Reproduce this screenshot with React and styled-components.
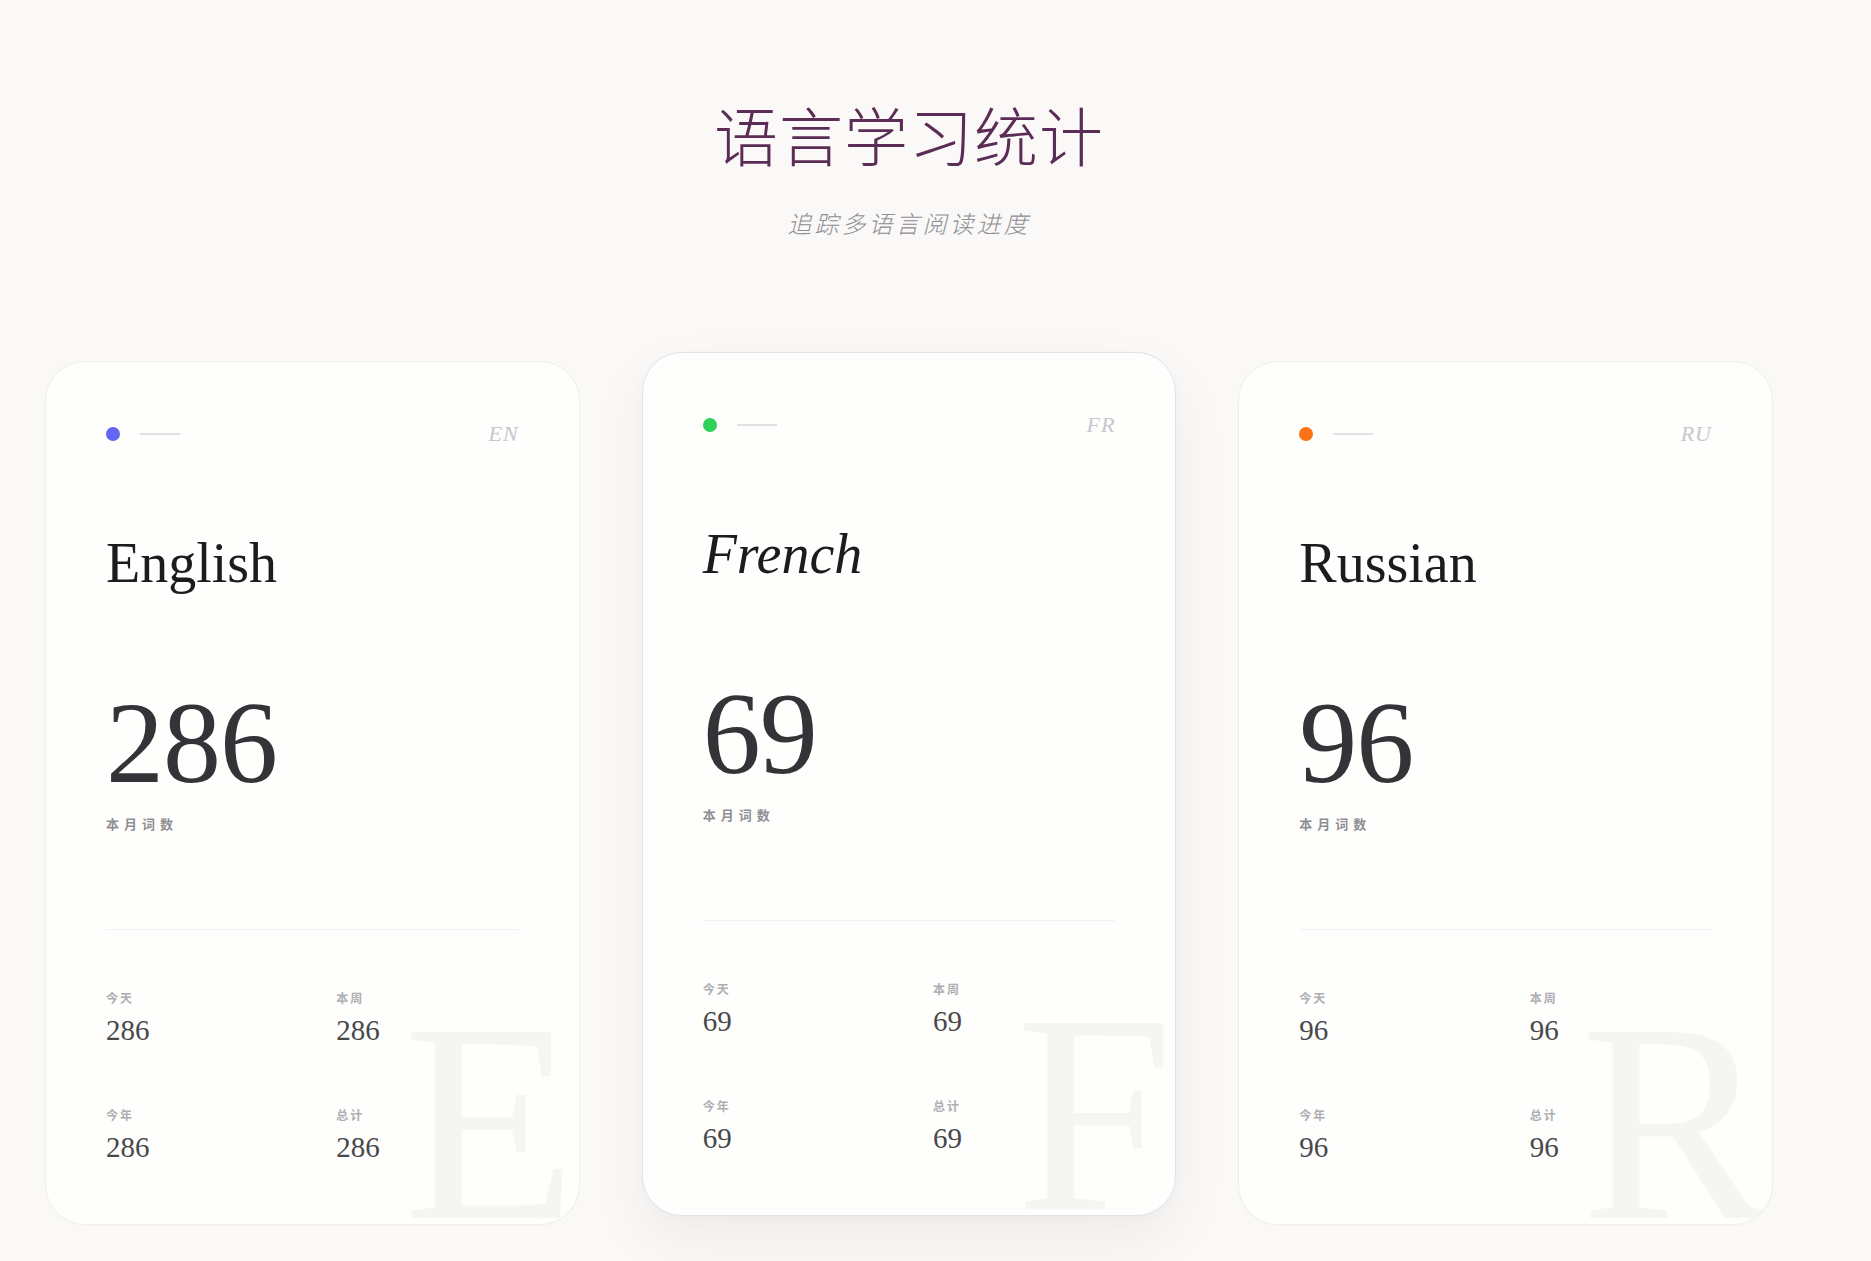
import React from "react";
import styled, { createGlobalStyle } from "styled-components";

const GlobalStyle = createGlobalStyle`
  * { box-sizing: border-box; }
  html, body {
    margin: 0;
    padding: 0;
    background: #faf9f7;
  }
  body {
    font-family: "Liberation Serif", "Noto Sans CJK SC", serif;
  }
`;

const languages = [
  {
    name: "English",
    code: "EN",
    letter: "E",
    color: "#6366f1",
    month: 286,
    today: 286,
    week: 286,
    year: 286,
    total: 286,
  },
  {
    name: "French",
    code: "FR",
    letter: "F",
    color: "#30d158",
    month: 69,
    today: 69,
    week: 69,
    year: 69,
    total: 69,
    italic: true,
    active: true,
  },
  {
    name: "Russian",
    code: "RU",
    letter: "R",
    color: "#f97316",
    month: 96,
    today: 96,
    week: 96,
    year: 96,
    total: 96,
  },
];

const App = () => {
  return (
    <>
      <GlobalStyle />
      <Page>
        <Header>
          <Title>语言学习统计</Title>
          <Subtitle>追踪多语言阅读进度</Subtitle>
        </Header>
        <Cards>
          {languages.map((lang) => (
            <Card key={lang.code} $active={lang.active}>
              <CardTop>
                <Marker>
                  <Dot $color={lang.color} />
                  <Rule />
                </Marker>
                <Code>{lang.code}</Code>
              </CardTop>
              <LangName $italic={lang.italic}>{lang.name}</LangName>
              <BigCount>{lang.month}</BigCount>
              <CountLabel>本月词数</CountLabel>
              <Divider />
              <StatGrid>
                <Stat>
                  <StatLabel>今天</StatLabel>
                  <StatValue>{lang.today}</StatValue>
                </Stat>
                <Stat>
                  <StatLabel>本周</StatLabel>
                  <StatValue>{lang.week}</StatValue>
                </Stat>
                <Stat>
                  <StatLabel>今年</StatLabel>
                  <StatValue>{lang.year}</StatValue>
                </Stat>
                <Stat>
                  <StatLabel>总计</StatLabel>
                  <StatValue>{lang.total}</StatValue>
                </Stat>
              </StatGrid>
              <Watermark aria-hidden="true">{lang.letter}</Watermark>
            </Card>
          ))}
        </Cards>
      </Page>
    </>
  );
};

const Page = styled.div`
  min-height: 1261px;
  padding: 95px 98px 0 45px;
`;

const Header = styled.header`
  display: flex;
  flex-direction: column;
  align-items: center;
`;

const Title = styled.h1`
  margin: 0;
  font-family: "Noto Sans CJK SC", sans-serif;
  font-weight: 300;
  font-size: 64px;
  line-height: 1.2;
  letter-spacing: 1px;
  color: #5b2d56;
`;

const Subtitle = styled.p`
  margin: 33px 0 0;
  font-family: "Noto Sans CJK SC", sans-serif;
  font-weight: 300;
  font-style: italic;
  font-size: 24px;
  line-height: 1.5;
  letter-spacing: 3px;
  color: #8e8e93;
`;

const Cards = styled.div`
  display: grid;
  grid-template-columns: repeat(3, 1fr);
  gap: 62px;
  align-items: start;
  margin-top: 120px;
`;

const Card = styled.div`
  position: relative;
  overflow: hidden;
  padding: 60px 60px 60px;
  background: #fefefd;
  border: 1px solid ${(p) => (p.$active ? "#e3e3e3" : "#efeeec")};
  border-radius: 40px;
  box-shadow: ${(p) =>
    p.$active
      ? "0 24px 60px rgba(0, 0, 0, 0.05), 0 4px 14px rgba(0, 0, 0, 0.02)"
      : "0 1px 3px rgba(0, 0, 0, 0.015)"};
  transform: ${(p) => (p.$active ? "translateY(-9px)" : "none")};

  & > *:not(:last-child) {
    position: relative;
    z-index: 1;
  }
`;

const CardTop = styled.div`
  display: flex;
  align-items: center;
  justify-content: space-between;
  height: 24px;
`;

const Marker = styled.div`
  display: flex;
  align-items: center;
  gap: 20px;
`;

const Dot = styled.span`
  width: 14px;
  height: 14px;
  border-radius: 50%;
  background: ${(p) => p.$color};
`;

const Rule = styled.span`
  width: 40px;
  height: 2px;
  background: #e2e2e5;
`;

const Code = styled.span`
  font-family: "Liberation Serif", serif;
  font-style: italic;
  font-size: 22px;
  letter-spacing: 1px;
  color: #c7c7cc;
`;

const LangName = styled.h2`
  margin: 84px 0 0;
  font-family: "Liberation Serif", serif;
  font-weight: 400;
  font-style: ${(p) => (p.$italic ? "italic" : "normal")};
  font-size: 56px;
  line-height: 1.2;
  color: #1c1c1e;
`;

const BigCount = styled.div`
  margin-top: 88px;
  font-family: "Liberation Serif", serif;
  font-size: 116px;
  line-height: 1;
  letter-spacing: -1px;
  color: #323438;
`;

const CountLabel = styled.div`
  margin-top: 14px;
  font-family: "Noto Sans CJK SC", sans-serif;
  font-weight: 700;
  font-size: 13px;
  line-height: 1.4;
  letter-spacing: 5px;
  color: #8e8e93;
`;

const Divider = styled.div`
  margin-top: 96px;
  height: 1px;
  background: #f1f1f1;
`;

const StatGrid = styled.div`
  display: grid;
  grid-template-columns: 1fr 1fr;
  column-gap: 48px;
  row-gap: 59px;
  margin-top: 60px;
`;

const Stat = styled.div`
  display: flex;
  flex-direction: column;
  gap: 6px;
`;

const StatLabel = styled.span`
  font-family: "Noto Sans CJK SC", sans-serif;
  font-weight: 700;
  font-size: 12px;
  line-height: 1.4;
  letter-spacing: 2px;
  color: #aeaeb2;
`;

const StatValue = styled.span`
  font-family: "Liberation Serif", serif;
  font-size: 29px;
  line-height: 1.2;
  color: #48484a;
`;

const Watermark = styled.span`
  position: absolute;
  right: 2px;
  bottom: -40px;
  z-index: 0;
  font-family: "Liberation Serif", serif;
  font-size: 284px;
  line-height: 1;
  color: rgba(0, 0, 0, 0.035);
  pointer-events: none;
  user-select: none;
`;

export default App;
